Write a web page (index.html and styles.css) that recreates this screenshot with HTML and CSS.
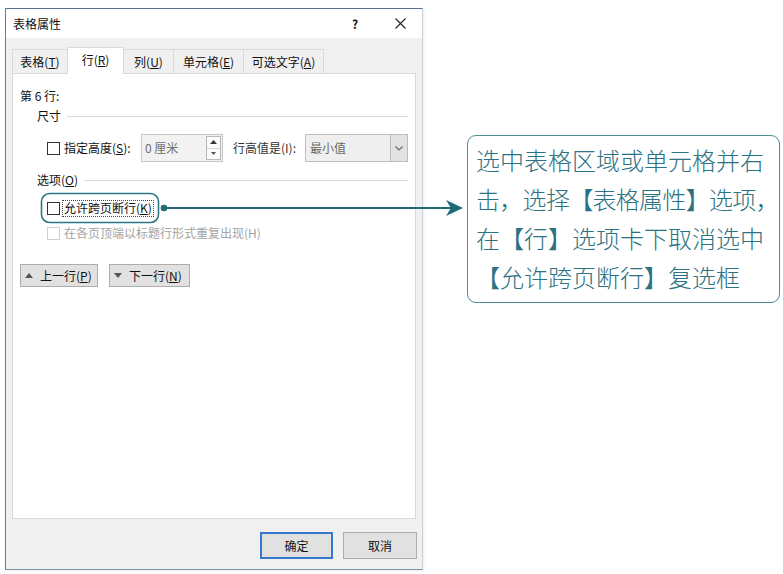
FILE: index.html
```html
<!DOCTYPE html>
<html lang="zh-CN">
<head>
<meta charset="utf-8">
<title>表格属性</title>
<link rel="stylesheet" href="styles.css">
</head>
<body>
<div class="page">
  <div class="dialog">
    <div class="titlebar">
      <span class="title">表格属性</span>
      <span class="help">?</span>
      <svg class="close" width="11" height="11" viewBox="0 0 11 11"><path d="M0.5 0.5L10.5 10.5M10.5 0.5L0.5 10.5" stroke="#222" stroke-width="1.1" fill="none"/></svg>
    </div>
    <div class="dlg-body">
      <div class="tabs">
        <div class="tab t1">表格(<u>T</u>)</div>
        <div class="tab t2 active">行(<u>R</u>)</div>
        <div class="tab t3">列(<u>U</u>)</div>
        <div class="tab t4">单元格(<u>E</u>)</div>
        <div class="tab t5">可选文字(<u>A</u>)</div>
      </div>
      <div class="panel">
        <div class="rowtitle">第 6 行:</div>
        <div class="group-head"><span>尺寸</span><i class="rule"></i></div>
        <div class="row-size">
          <span class="cb"></span>
          <span class="lbl-h">指定高度(<u>S</u>):</span>
          <div class="spin">
            <span class="spin-val">0 厘米</span>
            <div class="spin-btns">
              <span class="half"><svg width="7" height="4" viewBox="0 0 7 4"><path d="M0 4L3.5 0L7 4Z" fill="#333"/></svg></span>
              <span class="half"><svg width="5" height="3" viewBox="0 0 5 3"><path d="M0 0L2.5 3L5 0Z" fill="#555"/></svg></span>
            </div>
          </div>
          <span class="lbl-v">行高值是(I):</span>
          <div class="select">
            <span class="sel-val">最小值</span>
            <span class="sel-btn"><svg width="8" height="5" viewBox="0 0 8 5"><path d="M0.5 0.5L4 4L7.5 0.5" stroke="#666" stroke-width="1.1" fill="none"/></svg></span>
          </div>
        </div>
        <div class="group-head opt"><span>选项(<u>O</u>)</span><i class="rule"></i></div>
        <div class="cb-row first">
          <span class="cb"></span>
          <span class="focus">允许跨页断行(<u>K</u>)</span>
        </div>
        <div class="cb-row disabled">
          <span class="cb"></span>
          <span class="dis-text">在各页顶端以标题行形式重复出现(H)</span>
        </div>
        <div class="nav-row">
          <button class="nav prev"><svg width="8" height="5" viewBox="0 0 8 5"><path d="M0 5L4 0L8 5Z" fill="#555"/></svg><span>上一行(<u>P</u>)</span></button>
          <button class="nav next"><svg width="8" height="5" viewBox="0 0 8 5"><path d="M0 0L4 5L8 0Z" fill="#555"/></svg><span>下一行(<u>N</u>)</span></button>
        </div>
      </div>
      <div class="footer">
        <button class="btn default">确定</button>
        <button class="btn">取消</button>
      </div>
    </div>
  </div>
  <div class="callout">
    <div>选中表格区域或单元格并右</div>
    <div class="tight">击，选择【表格属性】选项，</div>
    <div>在【行】选项卡下取消选中</div>
    <div>【允许跨页断行】复选框</div>
  </div>
  <svg class="annot" width="783" height="574" viewBox="0 0 783 574">
    <rect x="41.5" y="193.5" width="117" height="29" rx="8" ry="8" fill="none" stroke="#2c7782" stroke-width="1.6"/>
    <circle cx="164" cy="208" r="3.3" fill="#1f6a77"/>
    <line x1="164" y1="208" x2="452" y2="208" stroke="#1f6a77" stroke-width="2"/>
    <path d="M446 200L463 208L446 216L451 208Z" fill="#1f6a77"/>
  </svg>
</div>
</body>
</html>
```

FILE: styles.css
```css
html, body {
  margin: 0;
  padding: 0;
  background: #ffffff;
}

body {
  font-family: "Noto Sans CJK SC", "Noto Sans", sans-serif;
  color: #111;
}

.page {
  position: relative;
  width: 783px;
  height: 574px;
  box-sizing: border-box;
  padding: 8px 0 0 5px;
  display: flex;
  align-items: flex-start;
  overflow: hidden;
}

/* ---------- dialog ---------- */
.dialog {
  width: 418px;
  height: 562px;
  box-sizing: border-box;
  border: 1px solid #7d93aa;
  border-top-color: #56728f;
  border-left-color: #3e86cf;
  border-right-color: #c9d2db;
  display: flex;
  flex-direction: column;
  flex: none;
  box-shadow: 1px 1px 3px rgba(0, 0, 0, 0.08);
}

.titlebar {
  height: 29px;
  flex: none;
  background: #ffffff;
  display: flex;
  align-items: center;
  padding-left: 7px;
  font-size: 12px;
  line-height: 16px;
}

.title {
  flex: 1;
}

.help {
  width: 14px;
  text-align: center;
  font-weight: bold;
  margin-right: 33px;
}

.close {
  margin-right: 16px;
}

.dlg-body {
  flex: 1;
  background: #f0f0f0;
  padding: 0 6px;
  display: flex;
  flex-direction: column;
}

/* tabs */
.tabs {
  height: 26px;
  margin-top: 9px;
  display: flex;
  align-items: flex-end;
}

.tab {
  height: 24px;
  box-sizing: border-box;
  border: 1px solid #d9d9d9;
  border-bottom: none;
  margin-left: -1px;
  font-size: 12px;
  line-height: 16px;
  display: flex;
  align-items: center;
  justify-content: center;
  background: #f0f0f0;
}

.t1 { width: 56px; margin-left: 0; }
.t2 { width: 57px; }
.t3 { width: 51px; }
.t4 { width: 71px; }
.t5 { width: 81px; }

.tab.active {
  height: 27px;
  background: #ffffff;
  margin-bottom: -1px;
  position: relative;
  z-index: 1;
  padding-bottom: 2px;
}

/* panel */
.panel {
  height: 446px;
  box-sizing: border-box;
  border: 1px solid #d9d9d9;
  background: #ffffff;
  padding: 14px 7px 0 7px;
  font-size: 12px;
  line-height: 16px;
}

.rowtitle {
  height: 16px;
}

.group-head {
  height: 16px;
  margin-top: 4px;
  padding-left: 17px;
  display: flex;
  align-items: center;
}

.group-head.opt {
  margin-top: 10px;
}

.rule {
  flex: 1;
  height: 1px;
  background: #dcdcdc;
  margin-left: 6px;
}

.cb {
  width: 13px;
  height: 13px;
  box-sizing: border-box;
  border: 1px solid #333;
  background: #fff;
  flex: none;
}

.row-size {
  height: 28px;
  margin-top: 10px;
  padding-left: 27px;
  display: flex;
  align-items: center;
}

.lbl-h {
  width: 77px;
  margin-left: 4px;
}

.spin {
  width: 82px;
  height: 28px;
  box-sizing: border-box;
  border: 1px solid #c6c6c6;
  background: #f2f2f2;
  display: flex;
  align-items: center;
}

.spin-val {
  padding-left: 3px;
  color: #707070;
  flex: 1;
}

.spin-btns {
  width: 15px;
  height: 24px;
  box-sizing: border-box;
  border: 1px solid #b8b8b8;
  background: #fbfbfb;
  margin-right: 1px;
  display: flex;
  flex-direction: column;
}

.half {
  flex: 1;
  display: flex;
  align-items: center;
  justify-content: center;
}

.half + .half {
  border-top: 1px solid #d4d4d4;
}

.lbl-v {
  width: 72px;
  margin-left: 10px;
  color: #333;
}

.select {
  width: 103px;
  height: 28px;
  box-sizing: border-box;
  border: 1px solid #bdbdbd;
  background: #efefef;
  display: flex;
  align-items: center;
}

.sel-val {
  flex: 1;
  padding-left: 4px;
  color: #6a6a6a;
}

.sel-btn {
  width: 17px;
  height: 100%;
  box-sizing: border-box;
  border-left: 1px solid #bdbdbd;
  background: #e2e2e2;
  display: flex;
  align-items: center;
  justify-content: center;
}

.cb-row {
  height: 18px;
  margin-top: 7px;
  padding-left: 27px;
  display: flex;
  align-items: center;
}

.cb-row.first {
  margin-top: 11px;
}

.focus {
  margin-left: 2px;
  height: 17px;
  box-sizing: border-box;
  border: 1px dotted #444;
  padding: 0 1px;
  display: flex;
  align-items: center;
}

.cb-row.disabled .cb {
  border-color: #cfcfcf;
}

.dis-text {
  margin-left: 4px;
  color: #a3a3a3;
}

.nav-row {
  margin-top: 22px;
  display: flex;
  gap: 11px;
}

.nav {
  height: 23px;
  box-sizing: border-box;
  border: 1px solid #adadad;
  background: #e1e1e1;
  font-family: inherit;
  font-size: 12px;
  line-height: 16px;
  color: #111;
  padding: 0 0 0 4px;
  display: flex;
  align-items: center;
}

.nav span {
  margin-left: 7px;
}

.nav.prev { width: 78px; }
.nav.next { width: 81px; }

.footer {
  margin-top: 13px;
  margin-right: -1px;
  display: flex;
  justify-content: flex-end;
  gap: 10px;
}

.btn {
  width: 74px;
  height: 27px;
  box-sizing: border-box;
  border: 1px solid #adadad;
  background: #e1e1e1;
  font-family: inherit;
  font-size: 12px;
  color: #111;
  padding: 0;
}

.btn.default {
  width: 73px;
  border: 2px solid #3479cf;
}

/* ---------- callout ---------- */
.callout {
  margin-left: 44px;
  margin-top: 127px;
  width: 313px;
  height: 168px;
  box-sizing: border-box;
  border: 1.5px solid #4b8c96;
  border-radius: 9px;
  padding: 4px 0 0 8px;
  color: #2b7282;
  font-size: 24px;
  font-weight: 300;
  line-height: 39px;
  white-space: nowrap;
  flex: none;
}

.callout .tight {
  letter-spacing: -0.7px;
}

.annot {
  position: absolute;
  left: 0;
  top: 0;
  pointer-events: none;
}
```
